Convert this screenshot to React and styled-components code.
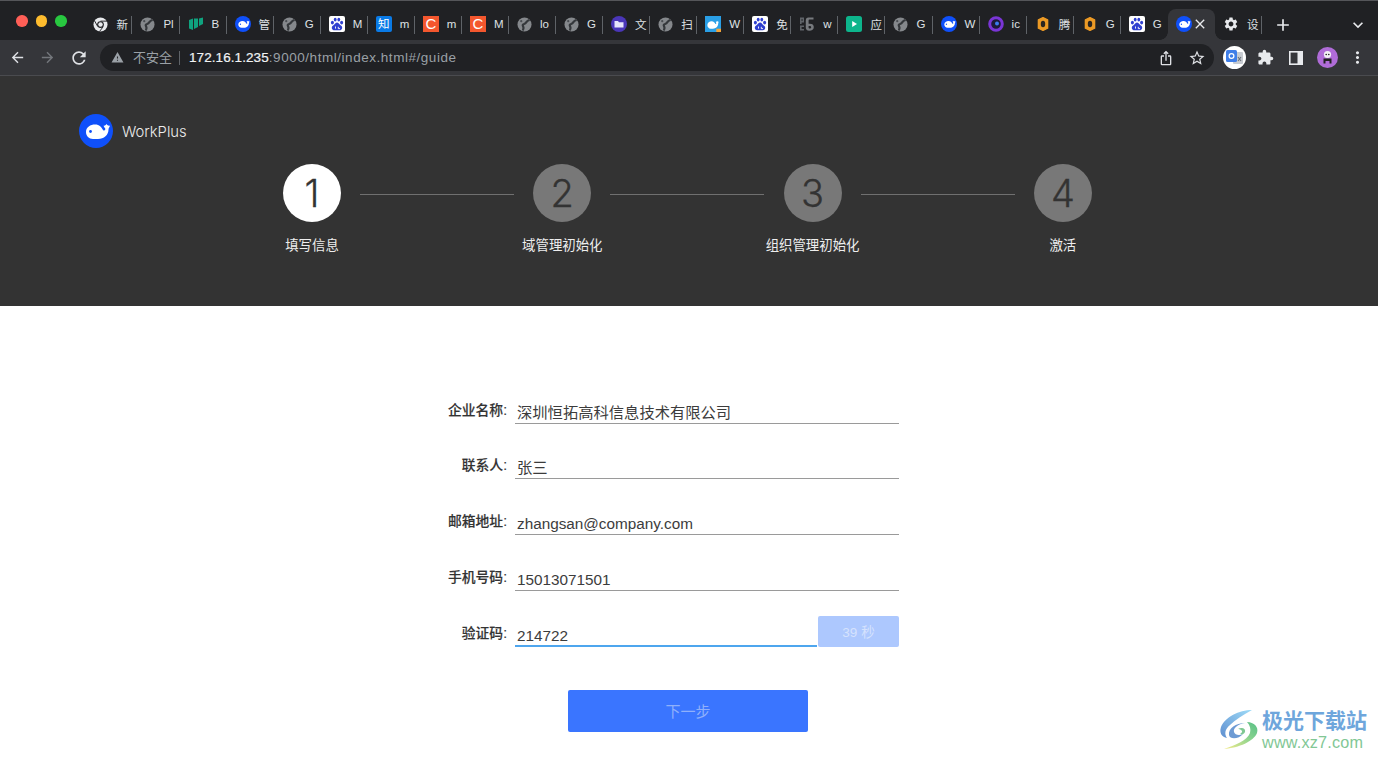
import React from "react";
import styled, { createGlobalStyle } from "styled-components";
import {
  MdArrowBack,
  MdArrowForward,
  MdRefresh,
  MdIosShare,
  MdStarBorder,
  MdExtension,
  MdSettings,
  MdMoreVert,
  MdAdd,
  MdClose,
  MdExpandMore,
  MdWarning,
} from "react-icons/md";

const SANS = `"Liberation Sans", "Noto Sans CJK SC", sans-serif`;

const GlobalStyle = createGlobalStyle`
  html, body {
    margin: 0;
    padding: 0;
    background: #fff;
    overflow: hidden;
  }
  body {
    font-family: ${SANS};
  }
`;

const Page = styled.div`
  position: relative;
  width: 1378px;
  height: 759px;
  overflow: hidden;
  background: #fff;
`;

/* browser chrome */
const TabStrip = styled.div`
  display: flex;
  height: 40px;
  background: #202124;
  border-top: 1px solid #55565a;
  box-sizing: border-box;
  padding-left: 16px;
`;

const Lights = styled.div`
  display: flex;
  gap: 8px;
  width: 69.4px;
  padding-top: 14px;
`;

const Light = styled.span`
  width: 11.5px;
  height: 11.5px;
  border-radius: 50%;
  background: ${(p) => p.$color};
`;

const Tabs = styled.div`
  display: flex;
  align-items: flex-end;
`;

const Tab = styled.div`
  position: relative;
  display: flex;
  align-items: center;
  gap: 8px;
  box-sizing: border-box;
  width: 47.07px;
  height: 31px;
  padding: 0 0 1px 8px;
  color: #dfe1e5;
  font-size: 12px;

  &::after {
    content: "";
    display: ${(p) => (p.$sep ? "block" : "none")};
    position: absolute;
    right: 0;
    top: 7px;
    width: 1px;
    height: 18px;
    background: #5f6368;
  }
`;

const ActiveTab = styled(Tab)`
  gap: 0;
  border-radius: 8px 8px 0 0;
  background: #35363a;

  &::before,
  &::after {
    content: "";
    display: block;
    position: absolute;
    top: auto;
    bottom: 0;
    width: 8px;
    height: 8px;
  }
  &::before {
    left: -8px;
    background: radial-gradient(circle at 0 0, transparent 7.5px, #35363a 8px);
  }
  &::after {
    right: -8px;
    background: radial-gradient(circle at 100% 0, transparent 7.5px, #35363a 8px);
  }
`;

const TabTitle = styled.span`
  white-space: nowrap;
  flex: none;
  font-size: 11.5px;
`;

const StripButton = styled.div`
  display: flex;
  align-items: center;
  justify-content: center;
  align-self: flex-end;
  height: 31px;
  width: ${(p) => p.$w}px;
  margin-left: ${(p) => p.$ml}px;
  color: #e8eaed;
`;

const Toolbar = styled.div`
  display: flex;
  align-items: center;
  height: 36px;
  background: #35363a;
  border-bottom: 1px solid #4a4b4f;
  box-sizing: border-box;
  padding: 0 0 0 7px;
`;

const NavButton = styled.div`
  display: flex;
  align-items: center;
  justify-content: center;
  width: 20px;
  margin-right: ${(p) => p.$mr}px;
  color: ${(p) => (p.$dim ? "#74777c" : "#dfe1e5")};
`;

const Omnibox = styled.div`
  display: flex;
  align-items: center;
  flex: none;
  width: 1114px;
  height: 27px;
  margin-left: 11px;
  box-sizing: border-box;
  padding: 0 8px 0 11px;
  border-radius: 14px;
  background: #202124;
  font-size: 13.5px;
  color: #9aa0a6;
`;

const SecurityText = styled.span`
  margin-left: 9px;
  font-size: 13px;
  padding-right: 7px;
  border-right: 1px solid #5f6368;
  line-height: 14px;
`;

const Url = styled.span`
  margin-left: 9px;
  white-space: nowrap;
  letter-spacing: 0.54px;
  b {
    font-weight: 400;
    color: #f1f3f4;
    letter-spacing: 0.08px;
    -webkit-text-stroke: 0.2px #f1f3f4;
  }
`;

const OmniActions = styled.div`
  display: flex;
  align-items: center;
  gap: 14px;
  margin-left: auto;
  color: #dfe1e5;
`;

const Extensions = styled.div`
  display: flex;
  align-items: center;
  color: #e8eaed;
  margin-left: 5.6px;
`;

const ExtSlot = styled.div`
  display: flex;
  align-items: center;
  justify-content: center;
  width: 30.75px;
  flex: none;
`;

const TranslateBadge = styled.div`
  width: 23px;
  height: 23px;
  border-radius: 50%;
  background: #fff;
  display: flex;
  align-items: center;
  justify-content: center;
`;

/* product header */
const Header = styled.header`
  height: 230px;
  background: #333;
  box-sizing: border-box;
  padding: 38px 0 0 79px;
`;

const Brand = styled.div`
  display: flex;
  align-items: center;
  gap: 9px;
  color: #ececec;
  font-family: Inter, ${SANS};
  font-weight: 300;
  font-size: 14.8px;
`;

const BrandName = styled.span`
  padding-top: 2px;
`;

const Stepper = styled.div`
  display: flex;
  align-items: flex-start;
  margin: 16px 0 0 204px;
`;

const Step = styled.div`
  display: flex;
  flex-direction: column;
  align-items: center;
  width: 58px;
  flex: none;
`;

const StepCircle = styled.div`
  width: 58px;
  height: 58px;
  border-radius: 50%;
  display: flex;
  align-items: center;
  justify-content: center;
  background: ${(p) => (p.$active ? "#fff" : "#787878")};
  color: #333;
  font-family: Inter, ${SANS};
  font-weight: 300;
  font-size: 38px;
  -webkit-text-stroke: 0.3px #333;
`;

const StepLabel = styled.div`
  margin-top: 14px;
  white-space: nowrap;
  color: #eee;
  font-size: 13.4px;
  line-height: 20px;
`;

const StepLine = styled.div`
  width: 154px;
  height: 1px;
  flex: none;
  margin: 30px 19.15px 0;
  background: #707070;
`;

/* form */
const Main = styled.main`
  display: flex;
  flex-direction: column;
  padding: 86.6px 0 0 435px;
`;

const Form = styled.div`
  display: grid;
  grid-template-columns: 73px 384px;
  column-gap: 7px;
  row-gap: 24.75px;
`;

const Label = styled.div`
  align-self: end;
  text-align: right;
  font-size: 13.8px;
  font-weight: 500;
  color: #333;
  line-height: 20px;
  padding: 0 1px 3px 0;
  white-space: nowrap;
  -webkit-text-stroke: 0.15px #333;
`;

const Field = styled.div`
  display: flex;
  align-items: flex-end;
  height: 31px;
`;

const Value = styled.div`
  flex: 1;
  box-sizing: border-box;
  height: 100%;
  padding: 10px 0 0 2px;
  font-size: 15.3px;
  line-height: 20px;
  color: #3c3c3c;
  border-bottom: ${(p) => (p.$focus ? "2px solid #4ea6ee" : "1px solid #9a9a9a")};
`;

const CodeButton = styled.div`
  width: 81px;
  height: 31px;
  margin-left: 1px;
  display: flex;
  align-items: center;
  justify-content: center;
  border-radius: 2px;
  background: #adc8fe;
  color: #d5e2fd;
  font-size: 13.5px;
`;

const NextButton = styled.div`
  width: 240px;
  height: 42px;
  margin: 43px 0 0 133px;
  display: flex;
  align-items: center;
  justify-content: center;
  border-radius: 2px;
  background: #3a75ff;
  color: #8fb0fb;
  font-size: 15px;
`;

/* site watermark, lies over the page */
const Watermark = styled.div`
  position: absolute;
  left: 1219px;
  top: 708px;
  display: flex;
  gap: 1px;
`;

const MarkText = styled.div`
  display: flex;
  flex-direction: column;
`;

const MarkTitle = styled.div`
  font-size: 21px;
  line-height: 25px;
  font-weight: 700;
  color: #6ea6dc;
`;

const MarkUrl = styled.div`
  font-size: 16.2px;
  line-height: 19px;
  letter-spacing: 0.2px;
  color: #82c795;
`;

const Whale = ({ size = 16, bg = "#0f50fa" }) => (
  <svg width={size} height={size} viewBox="0 0 34 34">
    <circle cx="17" cy="17" r="17" fill={bg} />
    <path
      d="M7 18C7 13 11.5 10.5 16 10.5C20.5 10.5 22.5 13 24 16C24.8 17 26.2 16.5 26.3 15C26.4 14 25 13.5 24.5 11.5C25.5 12 26.5 11.5 27.5 10C28.5 11.5 29.5 12 31 11.5C30.5 13.5 29.5 14 29.5 15.5C29.5 21 25 25 19 25H14C10 25 7 22 7 18Z"
      fill="#fff"
    />
    <circle cx="11.5" cy="17.5" r="1.4" fill={bg} />
  </svg>
);

const Globe = () => (
  <svg width="15" height="15" viewBox="0 0 16 16">
    <circle cx="8" cy="8" r="7.5" fill="#85888c" />
    <path d="M12.5 3.5C9.5 4.5 10.5 6.5 7.5 7.5C4 8.5 8.5 10.5 6.5 13.5" fill="none" stroke="#34373b" strokeWidth="2.4" strokeLinecap="round" />
    <circle cx="4.5" cy="4.5" r="1.2" fill="#4a4d52" />
  </svg>
);

const Chrome = () => (
  <svg width="15" height="15" viewBox="0 0 16 16">
    <circle cx="8" cy="8" r="7.5" fill="#e8eaed" />
    <circle cx="8" cy="8" r="3.6" fill="#202124" />
    <circle cx="8" cy="8" r="2.4" fill="#e8eaed" />
    <path d="M8 4.4H15M5 10L1.6 4M10.8 10.4L7 15.4" stroke="#202124" strokeWidth="1" />
  </svg>
);

const Bars = () => (
  <svg width="16" height="16" viewBox="0 0 16 16">
    <path d="M1 4L5 2.5V14L1 12.5ZM6 2.5H10V11L6 13ZM11 2.5L15 1.5V8L11 10Z" fill="#0fa37f" />
  </svg>
);

const Baidu = () => (
  <svg width="16" height="16" viewBox="0 0 16 16">
    <rect width="16" height="16" rx="2" fill="#fff" />
    <g fill="#2f3fd0">
      <ellipse cx="3.4" cy="6.6" rx="1.5" ry="1.9" />
      <ellipse cx="6.2" cy="3.6" rx="1.4" ry="1.9" />
      <ellipse cx="9.8" cy="3.6" rx="1.4" ry="1.9" />
      <ellipse cx="12.6" cy="6.6" rx="1.5" ry="1.9" />
      <path d="M8 6.5C10 6.5 10.5 9 12.5 10C14 11.5 13 14.5 10.5 14.3C9 14.2 7 14.2 5.5 14.3C3 14.5 2 11.5 3.5 10C5.5 9 6 6.5 8 6.5Z" />
    </g>
    <path d="M6.5 10.5V12.6M9.3 10.8V12.6H11" stroke="#fff" strokeWidth="0.9" fill="none" />
  </svg>
);

const ZhihuIcon = styled.div`
  width: 16px;
  height: 16px;
  border-radius: 2px;
  background: #0a7ae6;
  color: #fff;
  font-size: 11.5px;
  line-height: 16px;
  text-align: center;
  flex: none;
`;

const CsdnIcon = styled.div`
  width: 16px;
  height: 16px;
  background: #f4572e;
  color: #fff;
  font-size: 15px;
  line-height: 16px;
  text-align: center;
  flex: none;
`;

const FolderCircle = () => (
  <svg width="16" height="16" viewBox="0 0 16 16">
    <circle cx="8" cy="8" r="8" fill="#4a36b8" />
    <path d="M3.5 5H7L8 6.2H12.5V11.5H3.5Z" fill="#e6e4fb" />
  </svg>
);

const WhaleSquare = () => (
  <svg width="16" height="16" viewBox="0 0 34 34">
    <rect width="34" height="34" fill="#2a9fe6" />
    <path d="M5 19C5 14 9.5 11 14 11C18.5 11 21 14 22 17C23 17.6 24 17 24 15.5L23 12C24 12.5 25 12 26 10.5C27 12 28 12.5 29 12C28.5 14 28 15 28 16.5C28 22 23 27 17 27H12C8 27 5 23 5 19Z" fill="#fff" />
    <rect x="24" y="27" width="10" height="7" fill="#f2a33a" />
  </svg>
);

const Pc6 = () => (
  <svg width="16" height="16" viewBox="0 0 16 16">
    <path d="M1 1.5H5V6.5H2.6V8H1ZM2.6 3V5H3.5V3ZM1 9.5H5V11H2.6V13H5V14.5H1Z" fill="#5f6368" />
    <path d="M14.5 1.5H9.5C7.6 1.5 6.8 2.6 6.8 4.4V11.6C6.8 13.6 7.8 14.7 10.2 14.7C13 14.7 14.8 13.6 14.8 11C14.8 8.6 13 7.4 9.6 7.8V4.6C9.6 4 9.9 3.6 10.4 3.6H14.5ZM9.6 10H10.4C11.6 10 12.2 10.4 12.2 11.2C12.2 12 11.4 12.5 10.6 12.5C10 12.5 9.6 12.1 9.6 11.5Z" fill="#777a7e" />
  </svg>
);

const PlayTile = () => (
  <svg width="16" height="16" viewBox="0 0 16 16">
    <rect width="16" height="16" rx="2.5" fill="#0db58c" />
    <path d="M6.2 5L11 8L6.2 11Z" fill="#fff" />
  </svg>
);

const PurpleRing = () => (
  <svg width="16" height="16" viewBox="0 0 16 16">
    <circle cx="8" cy="8" r="6.3" fill="#1c1a3a" stroke="#7a35d6" strokeWidth="3" />
    <circle cx="9" cy="7.5" r="2" fill="#3c7bf0" />
  </svg>
);

const OrangeHex = () => (
  <svg width="12" height="16" viewBox="0 0 12 16" style={{ margin: "0 2px" }}>
    <path d="M6 1.6L10.6 3.8V12.2L6 14.4L1.4 12.2V3.8Z" fill="#ec9a25" stroke="#ec9a25" strokeWidth="1.4" strokeLinejoin="round" />
    <ellipse cx="6" cy="8" rx="2.2" ry="3.2" fill="#2a2520" />
  </svg>
);

const TranslateIcon = () => (
  <svg width="17" height="17" viewBox="0 0 17 17">
    <rect x="7" y="3" width="10" height="12" rx="1" fill="#c7cbd1" />
    <rect x="0" y="1" width="11" height="12" rx="1.5" fill="#3f7ee8" />
    <circle cx="5.5" cy="7" r="2.4" fill="none" stroke="#fff" strokeWidth="1.2" />
    <path d="M12 8L15 12M15 8L12 12" stroke="#6b7078" strokeWidth="1.1" />
  </svg>
);

const Avatar = () => (
  <svg width="21" height="21" viewBox="0 0 21 21">
    <circle cx="10.5" cy="10.5" r="10.5" fill="#b06cd8" />
    <circle cx="10.5" cy="7.5" r="3.6" fill="#f2f0f4" />
    <path d="M6.5 16.5V11.5H14.5V16.5H12.5V14H8.5V16.5Z" fill="#222" />
    <circle cx="9.2" cy="7.5" r="0.8" fill="#222" />
    <circle cx="11.8" cy="7.5" r="0.8" fill="#222" />
  </svg>
);

const SidePanel = () => (
  <svg width="14" height="14" viewBox="0 0 14 14">
    <rect x="0.8" y="0.8" width="12.4" height="12.4" fill="#35363a" stroke="#e8eaed" strokeWidth="1.6" />
    <rect x="8.5" y="1" width="5" height="12" fill="#e8eaed" />
  </svg>
);

const Swirl = () => (
  <svg width="42" height="42" viewBox="0 0 42 42">
    <defs>
      <linearGradient id="swirlBlue" x1="0" y1="1" x2="1" y2="0">
        <stop offset="0" stopColor="#5f8fd0" />
        <stop offset="1" stopColor="#9fdcf8" />
      </linearGradient>
      <linearGradient id="swirlGreen" x1="0" y1="1" x2="1" y2="0">
        <stop offset="0" stopColor="#f6ec8c" />
        <stop offset="0.6" stopColor="#86d28e" />
        <stop offset="1" stopColor="#58bf86" />
      </linearGradient>
    </defs>
    <path d="M33 2C20 2 6 9 2 19C0 25 3 29 8 30C5 26 6 21 11 17C16 12 24 7 33 2Z" fill="url(#swirlBlue)" />
    <path d="M10 27C9 20 17 15 26 15C19 16 14 20 15 24C16 27 20 28 24 26C20 31 11 32 10 27Z" fill="#6d9bd4" />
    <path d="M28 14C35 14 40 19 38 25C35 33 20 40 5 41C16 37 28 33 31 25C32 21 31 17 28 14Z" fill="url(#swirlGreen)" />
    <path d="M19 21C22 19 27 20 26 24C25 26 23 27 21 26C23 25 24 23 22 22C21 21 20 21 19 21Z" fill="#7fc893" />
  </svg>
);

const OpenTabs = [
  [<Chrome />, "新"],
  [<Globe />, "Pl"],
  [<Bars />, "B"],
  [<Whale />, "管"],
  [<Globe />, "G"],
  [<Baidu />, "M"],
  [<ZhihuIcon>知</ZhihuIcon>, "m"],
  [<CsdnIcon>C</CsdnIcon>, "m"],
  [<CsdnIcon>C</CsdnIcon>, "M"],
  [<Globe />, "lo"],
  [<Globe />, "G"],
  [<FolderCircle />, "文"],
  [<Globe />, "扫"],
  [<WhaleSquare />, "W"],
  [<Baidu />, "免"],
  [<Pc6 />, "w"],
  [<PlayTile />, "应"],
  [<Globe />, "G"],
  [<Whale />, "W"],
  [<PurpleRing />, "ic"],
  [<OrangeHex />, "腾"],
  [<OrangeHex />, "G"],
  [<Baidu />, "G"],
];

const STEPS = ["填写信息", "域管理初始化", "组织管理初始化", "激活"];

const FIELDS = [
  ["企业名称:", "深圳恒拓高科信息技术有限公司"],
  ["联系人:", "张三"],
  ["邮箱地址:", "zhangsan@company.com"],
  ["手机号码:", "15013071501"],
];

const App = () => (
  <Page>
    <GlobalStyle />
    <TabStrip>
      <Lights>
        <Light $color="#ff5f57" />
        <Light $color="#febc2e" />
        <Light $color="#28c840" />
      </Lights>
      <Tabs>
        {OpenTabs.map(([icon, title], i) => (
          <Tab key={i} $sep={i < OpenTabs.length - 1}>
            {icon}
            <TabTitle>{title}</TabTitle>
          </Tab>
        ))}
        <ActiveTab>
          <Whale />
          <MdClose size={16} color="#e8eaed" />
        </ActiveTab>
        <Tab $sep>
          <MdSettings size={16} color="#e8eaed" />
          <TabTitle>设</TabTitle>
        </Tab>
      </Tabs>
      <StripButton $w={20} $ml={11}>
        <MdAdd size={22} />
      </StripButton>
      <StripButton $w={20} $ml={55}>
        <MdExpandMore size={20} />
      </StripButton>
    </TabStrip>
    <Toolbar>
      <NavButton $mr={10}>
        <MdArrowBack size={17} />
      </NavButton>
      <NavButton $mr={12} $dim>
        <MdArrowForward size={17} />
      </NavButton>
      <NavButton $mr={0}>
        <MdRefresh size={20} />
      </NavButton>
      <Omnibox>
        <MdWarning size={13} />
        <SecurityText>不安全</SecurityText>
        <Url>
          <b>172.16.1.235</b>:9000/html/index.html#/guide
        </Url>
        <OmniActions>
          <MdIosShare size={16} />
          <MdStarBorder size={18} />
        </OmniActions>
      </Omnibox>
      <Extensions>
        <ExtSlot>
          <TranslateBadge>
            <TranslateIcon />
          </TranslateBadge>
        </ExtSlot>
        <ExtSlot>
          <MdExtension size={17} />
        </ExtSlot>
        <ExtSlot>
          <SidePanel />
        </ExtSlot>
        <ExtSlot>
          <Avatar />
        </ExtSlot>
        <ExtSlot>
          <MdMoreVert size={19} />
        </ExtSlot>
      </Extensions>
    </Toolbar>
    <Header>
      <Brand>
        <Whale size={34} />
        <BrandName>WorkPlus</BrandName>
      </Brand>
      <Stepper>
        {STEPS.map((label, i) => (
          <React.Fragment key={label}>
            {i > 0 && <StepLine />}
            <Step>
              <StepCircle $active={i === 0}>{i + 1}</StepCircle>
              <StepLabel>{label}</StepLabel>
            </Step>
          </React.Fragment>
        ))}
      </Stepper>
    </Header>
    <Main>
      <Form>
        {FIELDS.map(([label, value]) => (
          <React.Fragment key={label}>
            <Label>{label}</Label>
            <Field>
              <Value>{value}</Value>
            </Field>
          </React.Fragment>
        ))}
        <Label>验证码:</Label>
        <Field>
          <Value $focus>214722</Value>
          <CodeButton>39 秒</CodeButton>
        </Field>
      </Form>
      <NextButton>下一步</NextButton>
    </Main>
    <Watermark>
      <Swirl />
      <MarkText>
        <MarkTitle>极光下载站</MarkTitle>
        <MarkUrl>www.xz7.com</MarkUrl>
      </MarkText>
    </Watermark>
  </Page>
);

export default App;
